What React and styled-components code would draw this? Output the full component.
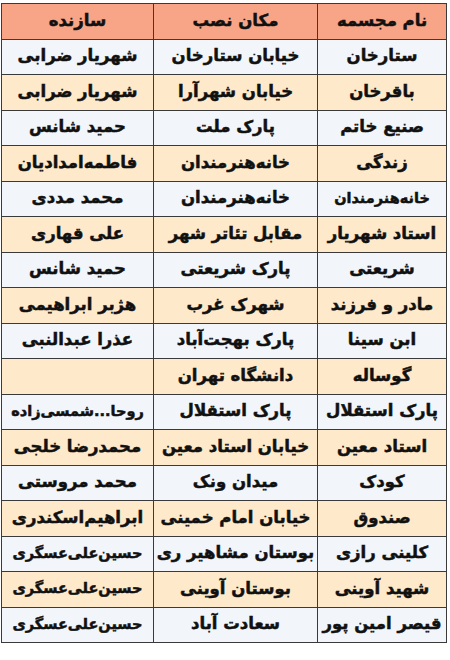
import React from "react";
import styled, { createGlobalStyle } from "styled-components";

const GlobalStyle = createGlobalStyle`
    body {
        margin: 0;
        background: #fff;
        font-family: "DejaVu Sans", sans-serif;
    }
`;

const Wrapper = styled.div`
    width: 450px;
    height: 660px;
    padding: 3px 3px 0 2px;
    box-sizing: border-box;
    direction: rtl;
`;

const Table = styled.table`
    width: 445px;
    height: 640px;
    border-collapse: collapse;
    table-layout: fixed;
    border: 1px solid #3a3a3a;
`;

const Row = styled.tr`
    height: 35.5px;
    background-color: ${(p) => (p.$head ? "#f8a487" : p.$alt ? "#fee9ca" : "#f2f6fb")};
`;

const Cell = styled.td`
    border: 1px solid #3a3a3a;
    text-align: center;
    vertical-align: middle;
    padding: 0 0 2px;
    font-size: ${(p) => (p.$small ? "14.5px" : "16.5px")};
    font-weight: bold;
    color: #111;
    -webkit-text-stroke: 0.5px #111;
    white-space: nowrap;
    overflow: hidden;
`;

// names that run too wide for their column in DejaVu
const longNames = new Set([
    "خانه‌هنرمندان",
    "روحا...شمسی‌زاده",
    "حسین‌علی‌عسگری",
]);

const rows = [
    ["ستارخان", "خیابان ستارخان", "شهریار ضرابی"],
    ["باقرخان", "خیابان شهرآرا", "شهریار ضرابی"],
    ["صنیع خاتم", "پارک ملت", "حمید شانس"],
    ["زندگی", "خانه‌هنرمندان", "فاطمه‌امدادیان"],
    ["خانه‌هنرمندان", "خانه‌هنرمندان", "محمد مددی"],
    ["استاد شهریار", "مقابل تئاتر شهر", "علی قهاری"],
    ["شریعتی", "پارک شریعتی", "حمید شانس"],
    ["مادر و فرزند", "شهرک غرب", "هژبر ابراهیمی"],
    ["ابن سینا", "پارک بهجت‌آباد", "عذرا عبدالنبی"],
    ["گوساله", "دانشگاه تهران", ""],
    ["پارک استقلال", "پارک استقلال", "روحا...شمسی‌زاده"],
    ["استاد معین", "خیابان استاد معین", "محمدرضا خلجی"],
    ["کودک", "میدان ونک", "محمد مروستی"],
    ["صندوق", "خیابان امام خمینی", "ابراهیم‌اسکندری"],
    ["کلینی رازی", "بوستان مشاهیر ری", "حسین‌علی‌عسگری"],
    ["شهید آوینی", "بوستان آوینی", "حسین‌علی‌عسگری"],
    ["قیصر امین پور", "سعادت آباد", "حسین‌علی‌عسگری"],
];

export default function App() {
    return (
        <Wrapper>
            <GlobalStyle />
            <Table>
                <colgroup>
                    <col style={{ width: "129px" }} />
                    <col style={{ width: "164px" }} />
                    <col style={{ width: "152px" }} />
                </colgroup>
                <tbody>
                    <Row $head>
                        <Cell>نام مجسمه</Cell>
                        <Cell>مکان نصب</Cell>
                        <Cell>سازنده</Cell>
                    </Row>
                    {rows.map((r, i) => (
                        <Row key={i} $alt={i % 2 === 1}>
                            {r.map((c, j) => (
                                <Cell key={j} $small={j !== 1 && longNames.has(c)}>
                                    {c}
                                </Cell>
                            ))}
                        </Row>
                    ))}
                </tbody>
            </Table>
        </Wrapper>
    );
}
